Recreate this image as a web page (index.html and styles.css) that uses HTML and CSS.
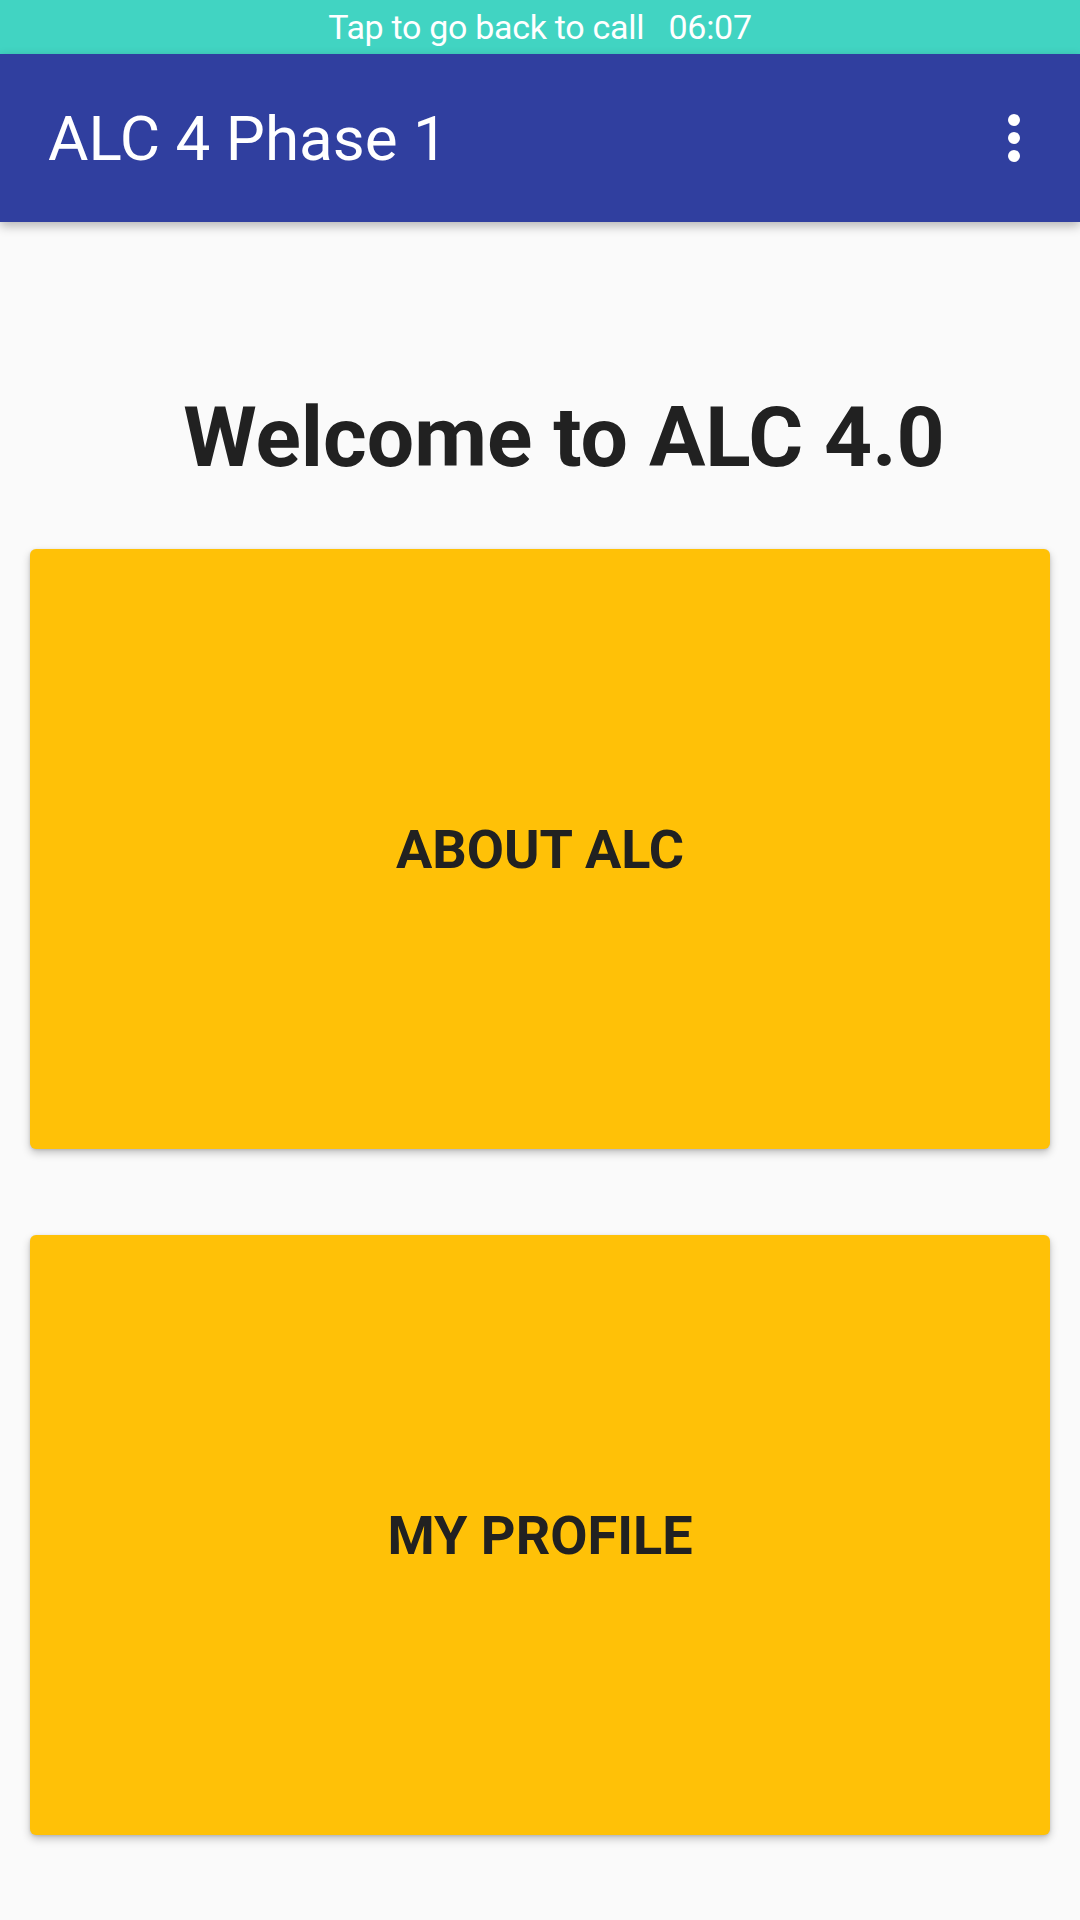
FILE: index.html
```html
<!DOCTYPE html>
<html>
<head>
<meta charset="utf-8">
<link rel="stylesheet" href="styles.css">
</head>
<body>
<div class="status-bar">Tap to go back to call&nbsp;&nbsp;&nbsp;06:07</div>
<header class="app-bar">
  <div class="app-title">ALC 4 Phase 1</div>
  <svg class="overflow" width="72" height="72" viewBox="0 0 24 24"><circle cx="12" cy="6" r="2" fill="#fff"/><circle cx="12" cy="12" r="2" fill="#fff"/><circle cx="12" cy="18" r="2" fill="#fff"/></svg>
</header>
<main class="content">
  <h1 class="welcome">Welcome to ALC 4.0</h1>
  <div class="card-btn">ABOUT ALC</div>
  <div class="card-btn">MY PROFILE</div>
</main>
</body>
</html>
```
FILE: styles.css
```css
html, body {
  margin: 0;
  padding: 0;
  background: #fafafa;
  font-family: Roboto, "Noto Sans", sans-serif;
  width: 1080px;
  height: 1920px;
  overflow: hidden;
}
.status-bar {
  height: 54px;
  background: #41d4c2;
  color: #fff;
  font-size: 34px;
  line-height: 54px;
  text-align: center;
  letter-spacing: -0.3px;
}
.app-bar {
  position: relative;
  z-index: 2;
  height: 168px;
  background: #303f9f;
  display: flex;
  align-items: center;
  justify-content: space-between;
  padding: 0 30px 0 48px;
  box-shadow: 0 4px 10px rgba(0,0,0,0.28);
}
.app-title {
  color: #fff;
  font-size: 62px;
  line-height: 72px;
  margin-top: 2px;
}
.overflow {
  display: block;
}
.content {
  display: flex;
  flex-direction: column;
  padding: 167px 30px 0 30px;
}
.welcome {
  margin: 0 0 62px 0;
  padding-left: 48px;
  font-size: 84px;
  line-height: 98px;
  font-weight: 700;
  color: #212121;
  text-align: center;
}
.card-btn {
  height: 600px;
  background: #ffc107;
  border-radius: 6px;
  box-shadow: 0 4px 8px rgba(0,0,0,0.22), 0 1px 3px rgba(0,0,0,0.12);
  display: flex;
  align-items: center;
  justify-content: center;
  font-size: 54px;
  font-weight: 700;
  color: #212121;
}
.card-btn + .card-btn {
  margin-top: 86px;
}
```
